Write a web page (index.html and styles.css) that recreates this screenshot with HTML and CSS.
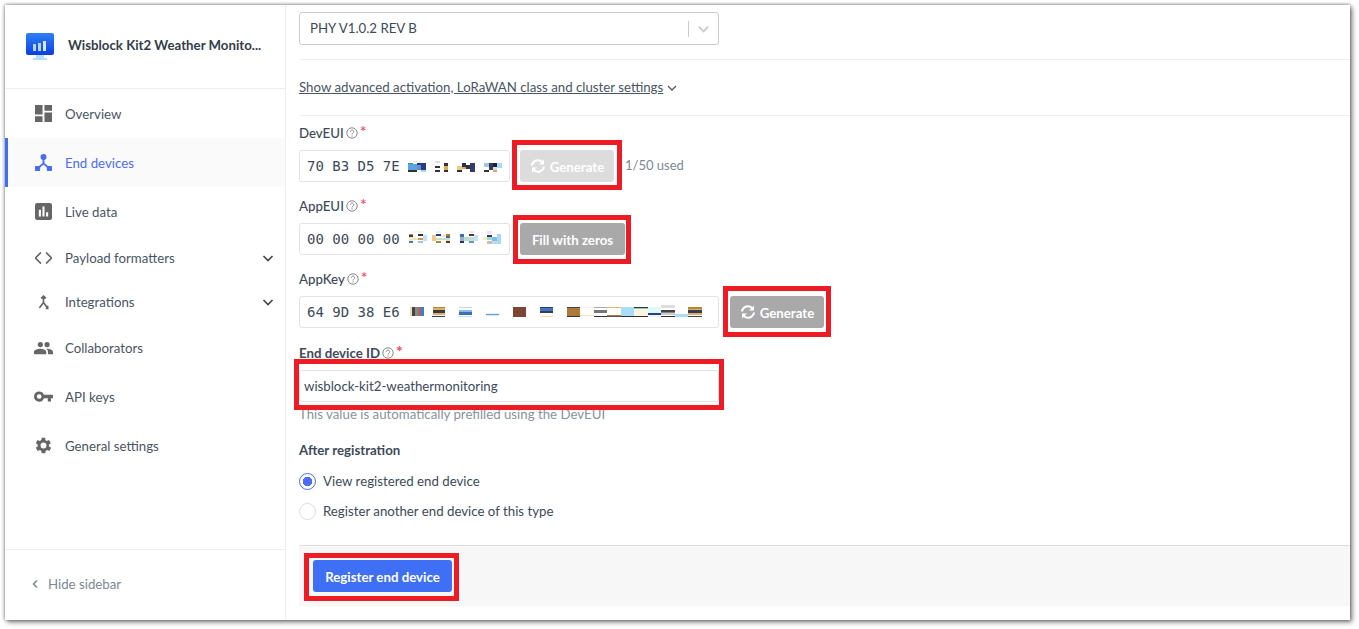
FILE: index.html
```html
<!DOCTYPE html>
<html lang="en">
<head>
<meta charset="utf-8">
<title>Register end device</title>
<link rel="stylesheet" href="styles.css">
</head>
<body>
<div class="window">
  <aside class="sidebar">
    <div class="brand">
      <svg class="brand-icon" viewBox="0 0 28 28" width="28" height="28"><defs><linearGradient id="g" x1="0" y1="0" x2="0" y2="1"><stop offset="0" stop-color="#2f80f5"/><stop offset="1" stop-color="#0a3fe0"/></linearGradient></defs><rect x="0" y="0" width="28" height="22" rx="2" fill="url(#g)"/><rect x="7" y="11" width="3" height="7" fill="#b5d4fb"/><rect x="12" y="10" width="3" height="8" fill="#b5d4fb"/><rect x="17" y="8" width="3" height="10" fill="#d5e6fd"/><path d="M10 22h8v3h3v2H7v-2h3z" fill="#b9dcfb"/></svg>
      <span class="brand-name">Wisblock Kit2 Weather Monito...</span>
    </div>
    <nav class="nav">
      <a class="nav-item h-49"><span class="ic-box"><svg viewBox="3 3 18 18" class="ic"><path d="M3 3h8v10H3zM13 3h8v6h-8zM13 11h8v10h-8zM3 15h8v6H3z"/></svg></span>Overview</a>
      <a class="nav-item h-49 active"><span class="ic-box"><svg viewBox="2 2 20 20" class="ic"><circle cx="12" cy="5.500" r="3.500"/><rect x="2" y="16" width="6" height="6" rx="1"/><rect x="16" y="16" width="6" height="6" rx="1"/><path d="M12 8v5M12 13l-7 6M12 13l7 6" stroke="currentColor" stroke-width="2.200" fill="none"/></svg></span>End devices</a>
      <a class="nav-item h-49"><span class="ic-box"><svg viewBox="2 2 20 20" class="ic"><path fill-rule="evenodd" d="M4.500 2h15A2.500 2.500 0 0 1 22 4.500v15a2.500 2.500 0 0 1-2.500 2.500h-15A2.500 2.500 0 0 1 2 19.500v-15A2.500 2.500 0 0 1 4.500 2zM6.500 10v8h2.500v-8zM10.800 6v12h2.400V6zM15 13v5h2.500v-5z"/></svg></span>Live data</a>
      <a class="nav-item h-44"><span class="ic-box"><svg viewBox="2 1 20 14" class="ic ic-code"><path d="M9 1.500L2.500 8 9 14.500M15 1.500L21.500 8 15 14.500" fill="none" stroke="currentColor" stroke-width="2"/></svg></span>Payload formatters<svg class="chev" viewBox="0 0 12 12"><path d="M1.500 4l4.500 4.500L10.500 4" fill="none" stroke="currentColor" stroke-width="1.600"/></svg></a>
      <a class="nav-item h-44"><span class="ic-box"><svg viewBox="0 0 12 16" class="ic ic-int"><path d="M6 2v6L1.500 14M6 8l4 5.500M3.500 3.500L6 1l2.500 2.500M8.500 14.500h3M10.500 11.500v3" fill="none" stroke="currentColor" stroke-width="1.800"/></svg></span>Integrations<svg class="chev" viewBox="0 0 12 12"><path d="M1.500 4l4.500 4.500L10.500 4" fill="none" stroke="currentColor" stroke-width="1.600"/></svg></a>
      <a class="nav-item h-48"><span class="ic-box"><svg viewBox="0 0 24 16" class="ic ic-wide"><path d="M16.500 7a3.300 3.300 0 1 0 0-6.600 3.300 3.300 0 0 0 0 6.600zM8 7a3.300 3.300 0 1 0 0-6.600A3.300 3.300 0 0 0 8 7zM8 9c-3 0-8 1.300-8 4v3h15.500v-3c0-2.700-4.500-4-7.500-4zM16.500 9h-1.200c1.600 1.100 2.400 2.400 2.400 4v3H24v-3c0-2.700-4.500-4-7.500-4z"/></svg></span>Collaborators</a>
      <a class="nav-item h-49"><span class="ic-box"><svg viewBox="0 0 24 14" class="ic ic-wide ic-key"><path fill-rule="evenodd" d="M6.500.500a6.500 6.500 0 0 1 6.100 4.300H24v4.400h-2.500V13.500h-4V9.200h-4.900A6.500 6.500 0 1 1 6.500.500zM6.500 4a3 3 0 1 0 0 6 3 3 0 0 0 0-6z"/></svg></span>API keys</a>
      <a class="nav-item h-49"><span class="ic-box"><svg viewBox="2.500 2.500 19 19" class="ic"><path fill-rule="evenodd" d="M19.400 13a7.500 7.500 0 0 0 0-2l2.100-1.600-2-3.500-2.500 1a7.500 7.500 0 0 0-1.700-1L15.300 3.200h-4l-.4 2.700a7.500 7.500 0 0 0-1.700 1l-2.500-1-2 3.500L6.800 11a7.500 7.500 0 0 0 0 2l-2.100 1.600 2 3.500 2.500-1a7.500 7.500 0 0 0 1.700 1l.4 2.700h4l.4-2.700a7.500 7.500 0 0 0 1.700-1l2.500 1 2-3.500zM13.300 15.300a3.300 3.300 0 1 1 0-6.600 3.300 3.300 0 0 1 0 6.600z" transform="translate(-1.300 0)"/></svg></span>General settings</a>
    </nav>
    <div class="hide"><svg viewBox="0 0 8 10" width="8" height="10"><path d="M6 1.500L2.500 5 6 8.500" fill="none" stroke="currentColor" stroke-width="1.500"/></svg>Hide sidebar</div>
  </aside>

  <main class="main">
    <div class="form">
      <div class="select"><span>PHY V1.0.2 REV B</span><span class="sel-sep"></span><svg viewBox="0 0 14 10" width="11" height="8" class="sel-chev"><path d="M1 2l6 6 6-6" fill="none" stroke="currentColor" stroke-width="2.500"/></svg></div>
      <hr class="rule r1">
      <div class="adv"><a>Show advanced activation, LoRaWAN class and cluster settings</a><svg viewBox="0 0 10 6" width="10" height="6"><path d="M1 1l4 4 4-4" fill="none" stroke="currentColor" stroke-width="1.300"/></svg></div>
      <hr class="rule r2">

      <label class="lab lab-first">DevEUI <svg class="q" viewBox="0 0 12 12"><circle cx="6" cy="6" r="5.200"/><path d="M4.300 4.700a1.700 1.700 0 1 1 2.600 1.500c-.6.400-.9.700-.9 1.300M6 8.500v1"/></svg><i class="req">*</i></label>
      <div class="row">
        <div class="inp w-210 mono">70 B3 D5 7E<svg class="mos" width="110" height="25" viewBox="0 0 110 25" shape-rendering="crispEdges"><rect x="8" y="8" width="5" height="1" fill="#3f8a9c"/><rect x="8" y="9" width="9" height="6" fill="#5aa5e0"/><rect x="8" y="15" width="9" height="2" fill="#333"/><rect x="13" y="6" width="8" height="2" fill="#f3efe3"/><rect x="17" y="8" width="4" height="2" fill="#2b3a6b"/><rect x="17" y="10" width="4" height="5" fill="#5f8fd0"/><rect x="21" y="8" width="5" height="7" fill="#2a3a80"/><rect x="21" y="15" width="5" height="2" fill="#a8d8f0"/><rect x="35" y="6" width="5" height="2" fill="#ddd"/><rect x="35" y="11" width="5" height="2" fill="#333"/><rect x="35" y="15" width="5" height="2" fill="#333"/><rect x="44" y="8" width="4" height="3" fill="#333"/><rect x="44" y="11" width="4" height="4" fill="#dfa860"/><rect x="44" y="15" width="4" height="2" fill="#333"/><rect x="57" y="11" width="5" height="4" fill="#f0c888"/><rect x="57" y="15" width="5" height="2" fill="#333"/><rect x="62" y="8" width="4" height="4" fill="#25305e"/><rect x="62" y="12" width="4" height="2" fill="#d8a860"/><rect x="66" y="10" width="4" height="4" fill="#333"/><rect x="70" y="8" width="5" height="9" fill="#333a70"/><rect x="84" y="8" width="5" height="4" fill="#9cc8e0"/><rect x="84" y="15" width="5" height="2" fill="#333"/><rect x="89" y="8" width="4" height="7" fill="#333a5a"/><rect x="93" y="8" width="4" height="4" fill="#223"/><rect x="93" y="12" width="4" height="3" fill="#ddd"/><rect x="93" y="15" width="4" height="2" fill="#d0a878"/><rect x="97" y="8" width="5" height="5" fill="#a8d8f8"/></svg></div>
        <button class="btn btn-off"><svg class="ref" viewBox="0 0 16 16"><path class="ref-a" d="M2 7.500A6 6 0 0 1 12.200 4M14 8.500A6 6 0 0 1 3.800 12"/><path class="ref-h" d="M14 1.500v5h-5zM2 14.500v-5h5z"/></svg>Generate</button>
        <span class="used">1/50 used</span>
      </div>

      <label class="lab">AppEUI <svg class="q" viewBox="0 0 12 12"><circle cx="6" cy="6" r="5.200"/><path d="M4.300 4.700a1.700 1.700 0 1 1 2.600 1.500c-.6.400-.9.700-.9 1.300M6 8.500v1"/></svg><i class="req">*</i></label>
      <div class="row">
        <div class="inp w-210 mono">00 00 00 00<svg class="mos" width="110" height="25" viewBox="0 0 110 25" shape-rendering="crispEdges"><rect x="9" y="6" width="4" height="1" fill="#d08838"/><rect x="9" y="7" width="4" height="2" fill="#2a3a6c"/><rect x="9" y="9" width="4" height="4" fill="#f5e6c0"/><rect x="9" y="13" width="4" height="2" fill="#4080c0"/><rect x="13" y="3" width="10" height="2" fill="#fbf1e0"/><rect x="13" y="10" width="5" height="2" fill="#f0e0c0"/><rect x="18" y="6" width="5" height="2" fill="#333"/><rect x="18" y="10" width="5" height="2" fill="#d09850"/><rect x="18" y="13" width="5" height="2" fill="#a0c8d8"/><rect x="23" y="7" width="4" height="6" fill="#bfe4f8"/><rect x="32" y="7" width="4" height="6" fill="#f0c88a"/><rect x="36" y="3" width="5" height="2" fill="#e8f0f8"/><rect x="36" y="6" width="5" height="2" fill="#2a3f7c"/><rect x="36" y="10" width="10" height="2" fill="#c0e0c8"/><rect x="36" y="13" width="5" height="2" fill="#b08838"/><rect x="41" y="7" width="5" height="2" fill="#f5e6c0"/><rect x="46" y="6" width="4" height="2" fill="#c07830"/><rect x="46" y="8" width="4" height="2" fill="#3a6ca8"/><rect x="46" y="10" width="4" height="3" fill="#d0e0c0"/><rect x="46" y="13" width="4" height="2" fill="#6a3020"/><rect x="60" y="6" width="4" height="3" fill="#3a70b0"/><rect x="60" y="9" width="4" height="4" fill="#a0b0c8"/><rect x="60" y="13" width="4" height="2" fill="#2a3060"/><rect x="64" y="9" width="5" height="4" fill="#b8e0d0"/><rect x="69" y="3" width="5" height="2" fill="#f8e8d8"/><rect x="69" y="6" width="5" height="2" fill="#5a3040"/><rect x="69" y="9" width="5" height="4" fill="#c0e0d0"/><rect x="69" y="13" width="5" height="2" fill="#6a98c8"/><rect x="74" y="7" width="4" height="6" fill="#bfe4f8"/><rect x="83" y="9" width="4" height="3" fill="#f8ecc8"/><rect x="87" y="3" width="5" height="3" fill="#e0e8f8"/><rect x="87" y="7" width="5" height="2" fill="#2a3a6c"/><rect x="87" y="9" width="5" height="3" fill="#a8d8c8"/><rect x="87" y="13" width="5" height="3" fill="#c8c0b0"/><rect x="92" y="9" width="5" height="4" fill="#7ac0f0"/><rect x="92" y="13" width="5" height="3" fill="#c8d8e8"/><rect x="97" y="6" width="4" height="10" fill="#a8d8f8"/></svg></div>
        <button class="btn btn-grey">Fill with zeros</button>
      </div>

      <label class="lab">AppKey <svg class="q" viewBox="0 0 12 12"><circle cx="6" cy="6" r="5.200"/><path d="M4.300 4.700a1.700 1.700 0 1 1 2.600 1.500c-.6.400-.9.700-.9 1.300M6 8.500v1"/></svg><i class="req">*</i></label>
      <div class="row">
        <div class="inp w-420 mono">64 9D 38 E6<svg class="mos mos-key" width="305" height="25" viewBox="0 0 305 25" shape-rendering="crispEdges"><rect x="5" y="7" width="2" height="9" fill="#f0dcb0"/><rect x="7" y="7" width="3" height="9" fill="#444"/><rect x="10" y="7" width="3" height="9" fill="#888"/><rect x="13" y="7" width="3" height="9" fill="#a8685a"/><rect x="16" y="7" width="3" height="9" fill="#3a80d0"/><rect x="28" y="7" width="12" height="1" fill="#b08838"/><rect x="28" y="8" width="12" height="2" fill="#e0b060"/><rect x="28" y="10" width="12" height="3" fill="#3a3a4c"/><rect x="28" y="13" width="12" height="2" fill="#e0b060"/><rect x="27" y="16" width="13" height="1" fill="#333a5a"/><rect x="54" y="7" width="13" height="1" fill="#c0d8ec"/><rect x="54" y="10" width="13" height="2" fill="#8ab8e0"/><rect x="54" y="12" width="13" height="3" fill="#3a70b0"/><rect x="54" y="16" width="13" height="1" fill="#c0e0f0"/><rect x="81" y="13" width="13" height="1" fill="#e0f0fa"/><rect x="81" y="14" width="13" height="1" fill="#5a9ee0"/><rect x="81" y="15" width="13" height="1" fill="#d8e8f4"/><rect x="108" y="7" width="13" height="10" fill="#7c4634"/><rect x="135" y="7" width="13" height="1" fill="#333a5a"/><rect x="135" y="8" width="13" height="3" fill="#3a78c0"/><rect x="135" y="11" width="13" height="2" fill="#3a3a5a"/><rect x="135" y="16" width="13" height="1" fill="#f5d8b0"/><rect x="162" y="7" width="13" height="1" fill="#444"/><rect x="162" y="8" width="13" height="8" fill="#b07838"/><rect x="162" y="16" width="13" height="1" fill="#333"/><rect x="175" y="7" width="14" height="1" fill="#fdf0e0"/><rect x="175" y="15" width="14" height="1" fill="#f5e0b8"/><rect x="189" y="7" width="13" height="1" fill="#aaa"/><rect x="189" y="10" width="13" height="3" fill="#777"/><rect x="189" y="16" width="13" height="1" fill="#333"/><rect x="202" y="7" width="14" height="1" fill="#e0b878"/><rect x="202" y="15" width="14" height="1" fill="#b07838"/><rect x="202" y="16" width="14" height="1" fill="#555"/><rect x="216" y="7" width="13" height="9" fill="#a8dcf8"/><rect x="216" y="16" width="13" height="1" fill="#333"/><rect x="229" y="7" width="14" height="1" fill="#333"/><rect x="229" y="8" width="14" height="1" fill="#88cccc"/><rect x="229" y="9" width="14" height="7" fill="#fdf5e0"/><rect x="229" y="16" width="14" height="1" fill="#333"/><rect x="243" y="7" width="13" height="6" fill="#e0fbfc"/><rect x="243" y="13" width="13" height="2" fill="#2a3f8c"/><rect x="243" y="15" width="13" height="2" fill="#e8f8fc"/><rect x="256" y="5" width="14" height="3" fill="#ddd"/><rect x="256" y="10" width="14" height="2" fill="#444"/><rect x="256" y="12" width="14" height="1" fill="#888"/><rect x="256" y="13" width="14" height="2" fill="#ccc"/><rect x="256" y="16" width="14" height="1" fill="#333"/><rect x="270" y="14" width="13" height="3" fill="#a8dcf8"/><rect x="283" y="7" width="14" height="2" fill="#b08838"/><rect x="283" y="9" width="14" height="1" fill="#e0b060"/><rect x="283" y="10" width="14" height="3" fill="#3a3a5c"/><rect x="283" y="13" width="14" height="2" fill="#e0b060"/><rect x="283" y="16" width="14" height="1" fill="#444"/></svg></div>
        <button class="btn btn-grey gen2"><svg class="ref" viewBox="0 0 16 16"><path class="ref-a" d="M2 7.500A6 6 0 0 1 12.200 4M14 8.500A6 6 0 0 1 3.800 12"/><path class="ref-h" d="M14 1.500v5h-5zM2 14.500v-5h5z"/></svg>Generate</button>
      </div>

      <label class="lab lab-strong">End device ID <svg class="q" viewBox="0 0 12 12"><circle cx="6" cy="6" r="5.200"/><path d="M4.300 4.700a1.700 1.700 0 1 1 2.600 1.500c-.6.400-.9.700-.9 1.300M6 8.500v1"/></svg><i class="req">*</i></label>
      <div class="inp w-420 idinp">wisblock-kit2-weathermonitoring</div>
      <p class="hint">This value is automatically prefilled using the DevEUI</p>

      <h4 class="after">After registration</h4>
      <div class="radio"><span class="dot on"></span>View registered end device</div>
      <div class="radio r2nd"><span class="dot"></span>Register another end device of this type</div>
    </div>
    <div class="foot"><button class="btn-primary">Register end device</button></div>
    <div class="mark m-dev"></div>
    <div class="mark m-fill"></div>
    <div class="mark m-gen"></div>
    <div class="mark m-id"></div>
    <div class="mark m-reg"></div>
  </main>
</div>
</body>
</html>
```

FILE: styles.css
```css
* { box-sizing: border-box; }
html, body { margin: 0; height: 100%; background: #fff; overflow: hidden; }
body { padding: 5px 9px 9px 5px; font-family: Lato, sans-serif; font-size: 13.250px; color: #3e4a59; }
.window { display: flex; height: 615px; width: 1345px; background: #fff; box-shadow: 2px 2px 5px rgba(0,0,0,.55), 0 -1px 3px rgba(0,0,0,.2), -1px 0 3px rgba(0,0,0,.2); }
.sidebar { width: 281px; flex: none; border-right: 1px solid #eee; display: flex; flex-direction: column; }
.brand { height: 84px; flex: none; border-bottom: 1px solid #eee; display: flex; align-items: center; padding: 0 20px 0 21px; gap: 14px; }
.brand-icon { flex: none; }
.brand-name { font-weight: 700; font-size: 13.250px; color: #333d4a; white-space: nowrap; margin-top: -3px; }
.nav { flex: 1; }
.nav-item { display: flex; align-items: center; padding: 0 11px 0 29px; color: #4a5563; }
.h-49 { height: 49px; }
.h-48 { height: 48px; }
.h-44 { height: 44px; }
.active { background: #fafafa; color: #4a6cf7; box-shadow: inset 3px 0 0 #3e6ff5; }
.ic-box { width: 31px; flex: none; display: flex; justify-content: flex-start; }
.ic { width: 17px; height: 17px; fill: #666; color: #666; margin-left: 1px; display: block; }
.active .ic { fill: #4a6cf7; color: #4a6cf7; }
.ic-code { height: 12px; }
.ic-int { width: 11px; height: 15px; margin-left: 4px; }
.ic-wide { width: 19px; height: 14px; margin-left: 0; }
.ic-key { height: 11px; }
.chev { width: 12px; height: 12px; margin-left: auto; color: #444; }
.hide { height: 71px; flex: none; border-top: 1px solid #eee; display: flex; align-items: center; gap: 9px; padding: 0 0 2px 26px; color: #7d8794; }
.main { flex: 1; position: relative; display: flex; flex-direction: column; }
.form { flex: 1; padding: 7px 0 0 13px; }
.select { width: 420px; height: 33px; border: 1px solid #ccc; border-radius: 3px; display: flex; align-items: center; padding-left: 10px; padding-bottom: 2px; }
.sel-sep { width: 1px; height: 16px; background: #ccc; margin-left: auto; margin-top: 2px; }
.sel-chev { color: #ccc; margin: 2px 9px 0; }
.rule { border: 0; height: 1px; background: #eee; margin: 0; }
.r1 { margin-top: 14px; }
.adv { height: 55px; display: flex; align-items: center; gap: 4px; color: #4a5563; padding-bottom: 2px; }
.adv a { text-decoration: underline; }
.adv svg { color: #555; margin-top: 2px; }
.lab { display: flex; align-items: center; height: 18px; margin-top: 15px; font-weight: 500; color: #3e4a59; gap: 2px; }
.lab-first { margin-top: 8px; }
.q { width: 12px; height: 12px; fill: none; stroke: #888; stroke-width: 1; }
.req { color: #f5475b; font-style: normal; font-size: 16px; line-height: 1; margin-top: -5px; }
.row { display: flex; align-items: center; margin-top: 8px; height: 32px; }
.inp { height: 32px; border: 1px solid #e3e3e3; border-radius: 3px; display: flex; align-items: center; background: #fff; }
.w-210 { width: 211px; }
.w-420 { width: 420px; }
.mono { font-family: "DejaVu Sans Mono", monospace; font-size: 14px; padding-left: 7px; white-space: pre; color: #3e4a59; flex: none; }
.mos { margin-left: 0; margin-top: 3px; flex: none; }
.mos-key { margin-left: 5px; margin-top: 1px; }
.btn { height: 32px; border: 0; border-radius: 3px; margin-left: 10px; color: #fff; font: 700 13.250px Lato, sans-serif; display: flex; align-items: center; justify-content: center; padding: 2px 0 0; }
.btn-off { width: 94px; background: #dcdcdc; }
.btn-grey { width: 105px; background: #a9a9a9; }
.gen2 { width: 94px; margin-left: 11px; }
.ref { width: 16px; height: 16px; margin-right: 4px; flex: none; margin-top: -2px; }
.ref-a { fill: none; stroke: #fff; stroke-width: 2; }
.ref-h { fill: #fff; }
.used { margin: -2px 0 0 11px; color: #7d8794; font-size: 13px; }
.lab-strong { margin-top: 16px; font-weight: 700; }
.idinp { margin-top: 8px; padding-left: 4px; }
.hint { margin: 3px 0 0; color: #8a929c; line-height: 18px; }
.after { margin: 18px 0 0; font-size: 13.250px; font-weight: 700; line-height: 18px; color: #3e4a59; }
.radio { display: flex; align-items: center; gap: 7px; margin-top: 13px; height: 18px; }
.r2nd { margin-top: 12px; }
.dot { width: 17px; height: 17px; border: 1px solid #dcdcdc; border-radius: 50%; flex: none; background: #fff; }
.dot.on { border-color: #4a6cf7; background: radial-gradient(circle, #4a6cf7 0 4.500px, #fff 5px); }
.foot { height: 61px; flex: none; margin: 0 0 14px 13px; background: #f7f7f7; border-top: 1px solid #ddd; display: flex; align-items: center; padding-left: 14px; }
.btn-primary { width: 139px; height: 32px; background: #3e6ff5; color: #fff; border: 0; border-radius: 3px; font: 700 13.250px Lato, sans-serif; padding: 2px 0 0; }
.mark { position: absolute; border: 5px solid #ed1c24; pointer-events: none; }
.m-dev { left: 226px; top: 135px; width: 110px; height: 50px; }
.m-fill { left: 227px; top: 210px; width: 118px; height: 49px; }
.m-gen { left: 437px; top: 281px; width: 108px; height: 51px; }
.m-id { left: 8px; top: 354px; width: 430px; height: 51px; }
.m-reg { left: 18px; top: 548px; width: 155px; height: 48px; }
```
